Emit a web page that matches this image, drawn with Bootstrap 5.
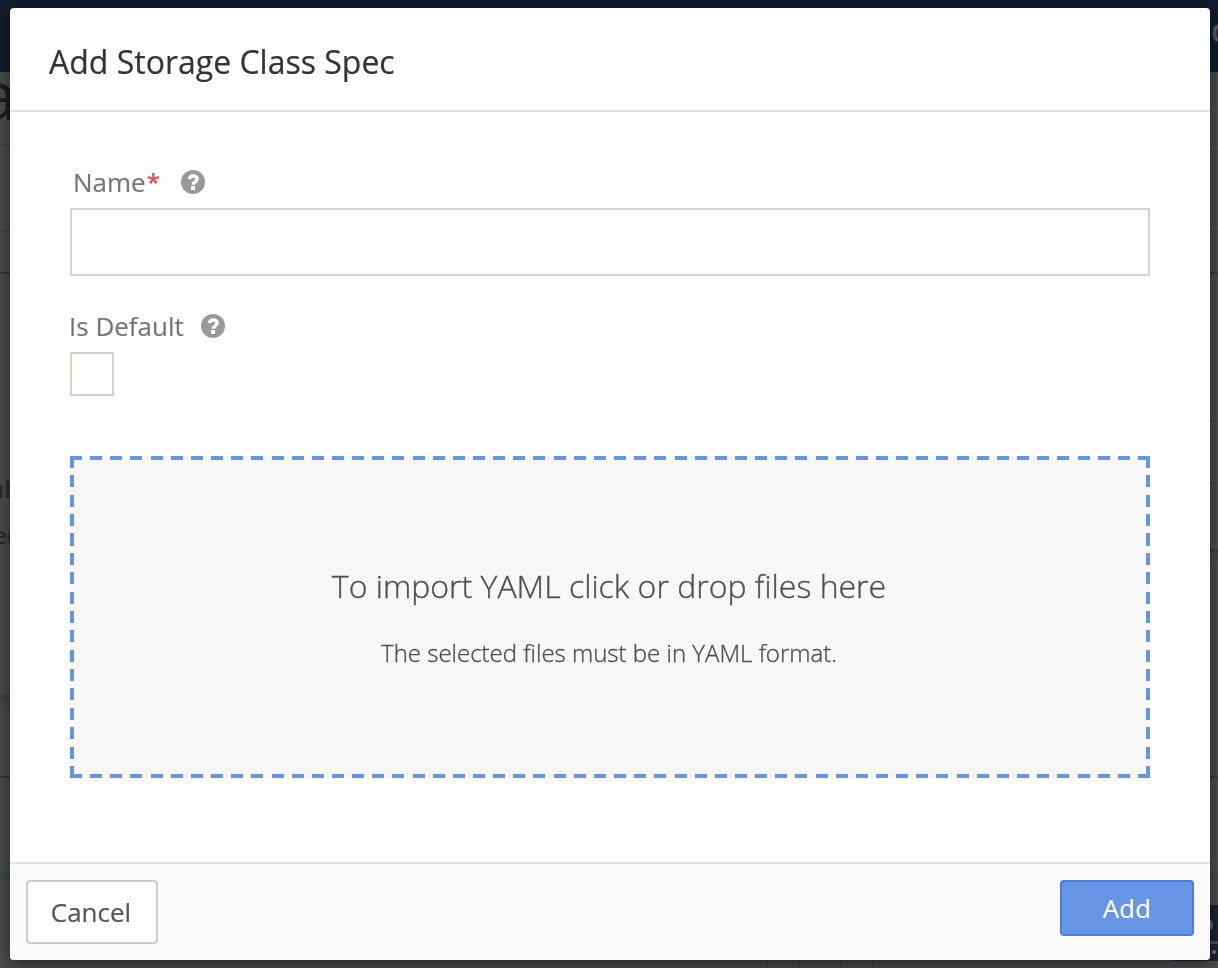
<!DOCTYPE html>
<html lang="en">
<head>
<meta charset="utf-8">
<meta name="viewport" content="width=device-width, initial-scale=1">
<title>Add Storage Class Spec</title>
<link href="https://cdn.jsdelivr.net/npm/bootstrap@5.3.0/dist/css/bootstrap.min.css" rel="stylesheet">
<style>
  body { font-family: "Open Sans", "Noto Sans", sans-serif; background: #4b4b4b; height: 968px; }
  /* dimmed page behind the dialog */
  .under { height: 968px; color: #1c1c1c; }
  .under-nav { height: 72px; background: #121c2f; color: #545a64; font-size: 32px; line-height: 60px; }
  .under-nav span { width: 7px; font-weight: 600; }
  .under-main { height: 896px; }
  .strip { flex: none; border-bottom: 2px solid #444; white-space: nowrap; }
  .strip-dark { border-bottom-color: #383838; }
  .strip-plain { border-bottom: 0; }
  .under-title { font-size: 68px; line-height: 44px; text-indent: -21px; }
  .under-text { font-size: 24px; line-height: 46px; font-weight: 600; color: #2a2a2a; padding-top: 192px; }
  .strip-shade { background: linear-gradient(#404040, #4b4b4b 14px); }
  .strip-blue { background: #43474b; }
  .toast-navy { background: #1c2230; width: 48px; }
  .toast-ring { width: 14px; height: 14px; border: 3px solid #686868; margin: 13px 5px 0 auto; }
  .toast-foot { border-bottom-left-radius: 6px; }
  .toast-dot { width: 4px; height: 4px; background: #777; margin: 6px 2px 0 auto; }
  .under-tabs { height: 8px; margin-left: 766px; }
  .under-tabs div { border-left: 2px solid #414141; }

  .modal { z-index: 10; }
  .modal-dialog { max-width: none; width: 1200px; margin: 8px 0 0 10px; }
  .modal-content { height: 952px; border: 0; border-radius: 4px; box-shadow: 0 4px 16px rgba(0,0,0,.5); }
  .modal-header { height: 104px; border-bottom: 2px solid #e4e4e4; padding: 6px 39px 0; }
  .modal-title { font-size: 32px; line-height: 44px; font-weight: 400; color: #333; -webkit-text-stroke: .2px; }
  .modal-body { padding: 52px 60px 0; }
  .form-label { font-size: 26px; line-height: 36px; color: #777; height: 44px; -webkit-text-stroke: .2px; }
  .req { color: #d9534f; font-size: 24px; font-weight: 600; margin-left: 1px; line-height: 1; vertical-align: 1px; }
  .help { width: 24px; height: 24px; }
  .form-control { height: 68px; border: 2px solid #d5d5d5; border-radius: 0; }
  .form-check-input.box { width: 44px; height: 44px; border: 2px solid #d3d0c9; border-radius: 0; }
  .drop {
    --c: #6795e6;
    height: 322px; margin-top: 60px; color: #505050; font-weight: 300; padding-right: 2px; -webkit-text-stroke: .35px;
    background:
      repeating-linear-gradient(90deg, var(--c) 0 12px, transparent 12px 20.151px) top / 100% 4px no-repeat,
      repeating-linear-gradient(90deg, var(--c) 0 12px, transparent 12px 20.151px) bottom / 100% 4px no-repeat,
      repeating-linear-gradient(180deg, var(--c) 0 12px, transparent 12px 19.375px) left / 4px 100% no-repeat,
      repeating-linear-gradient(180deg, var(--c) 0 12px, transparent 12px 19.375px) right / 4px 100% no-repeat,
      #f7f7f7;
  }
  .drop-main { font-size: 32px; line-height: 46px; padding-top: 107px; }
  .drop-sub { font-size: 24px; line-height: 34px; margin-top: 27px; }
  .modal-footer { height: 98px; background: #fafafa; border-top: 2px solid #e4e4e4; border-radius: 0 0 4px 4px; padding: 16px; }
  .modal-footer > * { margin: 0; }
  .modal-footer .btn { border-width: 2px; border-radius: 4px; font-size: 26px; line-height: 1; padding: 0; -webkit-text-stroke: .2px; }
  .modal-footer .btn-cancel { width: 132px; height: 64px; background: #fff; border-color: #ccc; color: #555; padding-right: 2px; }
  .btn-add { width: 134px; height: 56px; background: #6796e6; border-color: #4f7ddd; color: #fff; }
</style>
</head>
<body class="overflow-hidden">
<div class="under overflow-hidden" aria-hidden="true">
  <div class="under-nav text-end overflow-hidden"><span class="d-inline-block overflow-hidden align-top">c</span></div>
  <div class="under-main d-flex justify-content-between">
    <div class="d-flex flex-column flex-fill">
      <div class="strip under-title" style="height:74px">a</div>
      <div class="strip" style="height:86px"></div>
      <div class="strip strip-dark" style="height:42px"></div>
      <div class="strip under-text" style="height:422px"><div style="text-indent:-11px">ub</div><div style="text-indent:-7px">ec</div></div>
      <div class="strip strip-shade strip-dark" style="height:82px"></div>
      <div class="strip strip-plain" style="height:94px"></div>
      <div class="strip strip-plain strip-blue" style="height:8px"></div>
      <div class="strip strip-plain" style="height:80px"></div>
      <div class="under-tabs d-flex"><div style="width:32px"></div><div style="width:42px"></div><div style="width:32px"></div><div></div></div>
    </div>
    <div class="d-flex flex-column align-items-stretch" style="width:48px">
      <div class="strip" style="height:74px"></div>
      <div class="strip" style="height:86px"></div>
      <div class="strip strip-dark" style="height:42px"></div>
      <div class="strip" style="height:148px"></div>
      <div class="strip" style="height:62px"></div>
      <div class="strip strip-dark" style="height:67px"></div>
      <div class="strip strip-shade strip-dark" style="height:227px"></div>
      <div class="strip strip-plain" style="height:94px"></div>
      <div class="strip strip-plain strip-blue" style="height:8px"></div>
      <div class="strip strip-plain" style="height:25px"></div>
      <div class="strip strip-plain toast-navy d-flex" style="height:36px"><div class="toast-ring rounded-circle"></div></div>
      <div class="strip strip-plain" style="height:3px"></div>
      <div class="strip strip-plain toast-navy toast-foot d-flex" style="height:17px"><div class="toast-dot rounded-circle"></div></div>
    </div>
  </div>
</div>

<div class="modal d-block overflow-hidden" tabindex="-1" role="dialog" aria-labelledby="dialogTitle">
  <div class="modal-dialog">
    <form class="modal-content">
      <div class="modal-header">
        <h1 class="modal-title" id="dialogTitle">Add Storage Class Spec</h1>
      </div>
      <div class="modal-body">
        <label class="form-label d-flex mb-0" for="name" style="padding-left:3px">
          <span>Name<span class="req">*</span></span>
          <svg class="help" style="margin:6px 0 0 21px" viewBox="0 0 24 24"><circle cx="12" cy="12" r="12" fill="#999"/><path d="M8.2 9.1C8.8 7 10.1 6 12.2 6c2.3 0 4 1.3 4 3.2 0 2.9-4.1 2.7-4.1 5.6" fill="none" stroke="#fff" stroke-width="3.4"/><path d="M10.1 16h4v4h-4z" fill="#fff"/></svg>
        </label>
        <input class="form-control" id="name" type="text">
        <label class="form-label d-flex mb-0" for="isDefault" style="margin:32px 0 0 -1px">
          <span>Is Default</span>
          <svg class="help" style="margin:6px 0 0 17px" viewBox="0 0 24 24"><circle cx="12" cy="12" r="12" fill="#999"/><path d="M8.2 9.1C8.8 7 10.1 6 12.2 6c2.3 0 4 1.3 4 3.2 0 2.9-4.1 2.7-4.1 5.6" fill="none" stroke="#fff" stroke-width="3.4"/><path d="M10.1 16h4v4h-4z" fill="#fff"/></svg>
        </label>
        <input class="form-check-input box d-block m-0" id="isDefault" type="checkbox">
        <div class="drop text-center">
          <div class="drop-main">To import YAML click or drop files here</div>
          <div class="drop-sub">The selected files must be in YAML format.</div>
        </div>
      </div>
      <div class="modal-footer justify-content-between align-items-start">
        <button class="btn btn-cancel" type="button">Cancel</button>
        <button class="btn btn-add" type="button">Add</button>
      </div>
    </form>
  </div>
</div>
<script src="https://cdn.jsdelivr.net/npm/bootstrap@5.3.0/dist/js/bootstrap.bundle.min.js"></script>
</body>
</html>
